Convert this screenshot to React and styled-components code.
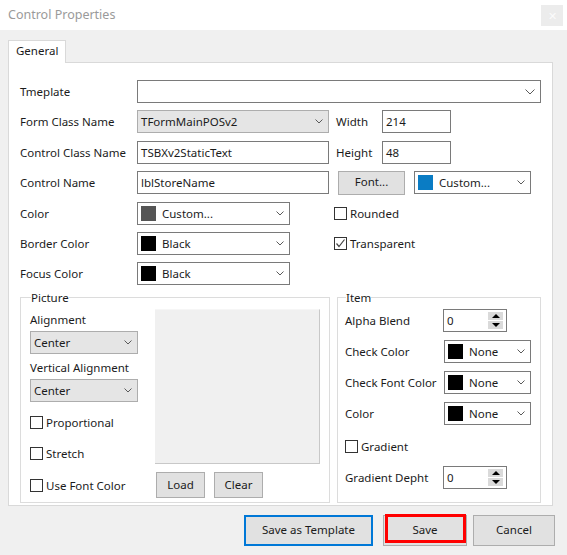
import React from 'react';
import styled, { createGlobalStyle } from 'styled-components';

const GlobalStyle = createGlobalStyle`
  html, body {
    margin: 0;
    padding: 0;
    background: #f0f0f0;
  }
  body {
    font-family: "Noto Sans", "Open Sans", sans-serif;
    font-size: 11.5px;
    color: #1b1b1b;
  }
  * {
    box-sizing: border-box;
  }
`;

const Window = styled.div`
  width: 567px;
  height: 555px;
  display: flex;
  flex-direction: column;
  background: #f0f0f0;
  overflow: hidden;
`;

const TitleBar = styled.div`
  height: 30px;
  flex: none;
  background: #fff;
  display: flex;
  align-items: center;
  justify-content: space-between;
  padding: 0 4px 2px 8px;
`;

const Title = styled.span`
  font-size: 12.5px;
  color: #9a9a9a;
`;

const CloseButton = styled.div`
  width: 22px;
  height: 21px;
  margin-top: 3px;
  background: #ececec;
  color: #fbfbfb;
  font-size: 11px;
  display: flex;
  align-items: center;
  justify-content: center;
`;

const TabStrip = styled.div`
  display: flex;
  padding: 10px 0 0 8px;
`;

const Tab = styled.div`
  width: 58px;
  height: 23px;
  background: #fff;
  border: 1px solid #d9d9d9;
  border-bottom: none;
  margin-bottom: -1px;
  position: relative;
  z-index: 1;
  display: flex;
  align-items: center;
  padding: 0 0 3px 7px;
`;

const TabPage = styled.div`
  margin-left: 8px;
  width: 545px;
  height: 444px;
  background: #fff;
  border: 1px solid #d9d9d9;
  padding: 17px 11px 2px 11px;
  display: flex;
  flex-direction: column;
`;

const FormRows = styled.div`
  display: flex;
  flex-direction: column;
  gap: 7.4px;
`;

const Row = styled.div`
  display: flex;
  align-items: center;
  height: 23px;
`;

const Label = styled.span`
  width: ${(p) => p.$w || 117}px;
  flex: none;
  white-space: nowrap;
`;

const TextInput = styled.div`
  width: ${(p) => (p.$w ? `${p.$w}px` : 'auto')};
  flex: ${(p) => (p.$w ? 'none' : '1')};
  height: 23px;
  border: 1px solid #7a7a7a;
  background: #fff;
  display: flex;
  align-items: center;
  padding-left: 3px;
  margin-right: ${(p) => p.$mr || 0}px;
`;

const ComboBox = styled.div`
  width: ${(p) => (p.$w ? `${p.$w}px` : 'auto')};
  flex: ${(p) => (p.$w ? 'none' : '1')};
  height: 23px;
  border: 1px solid ${(p) => (p.$gray ? '#adadad' : '#7a7a7a')};
  background: ${(p) => (p.$gray ? '#e5e5e5' : '#fff')};
  display: flex;
  align-items: center;
  padding: 0 0 0 3px;
  margin-right: ${(p) => p.$mr || 0}px;
`;

const ComboText = styled.span`
  flex: 1;
  white-space: nowrap;
`;

const Swatch = styled.span`
  width: 15px;
  height: 15px;
  flex: none;
  background: ${(p) => p.$color};
  margin-right: 6px;
`;

const ChevronWrap = styled.span`
  width: ${(p) => p.$pad}px;
  display: flex;
  justify-content: center;
  flex: none;
`;

const Chevron = ({ big }) => (
  <ChevronWrap $pad={big ? 21 : 19}>
    <svg width={big ? 10 : 8} height={big ? 6 : 5} viewBox={big ? '0 0 10 6' : '0 0 8 5'}>
      <polyline
        points={big ? '0.5,0.5 5,5 9.5,0.5' : '0.5,0.5 4,4 7.5,0.5'}
        fill="none"
        stroke="#5a5a5a"
        strokeWidth="1"
      />
    </svg>
  </ChevronWrap>
);

const Combo = ({ w, gray, swatch, children, big, mr }) => (
  <ComboBox $w={w} $gray={gray} $mr={mr}>
    {swatch && <Swatch $color={swatch} />}
    <ComboText>{children}</ComboText>
    <Chevron big={big} />
  </ComboBox>
);

const Button = styled.div`
  width: ${(p) => p.$w}px;
  height: ${(p) => p.$h || 26}px;
  flex: none;
  background: #e1e1e1;
  border: 1px solid ${(p) => (p.$default ? '#0078d7' : '#adadad')};
  box-shadow: ${(p) => (p.$default ? 'inset 0 0 0 1px #0078d7' : 'none')};
  display: flex;
  align-items: center;
  justify-content: center;
  padding-bottom: 2px;
  margin-right: ${(p) => p.$mr || 0}px;
  position: relative;
`;

const Highlight = styled.span`
  position: absolute;
  left: 1px;
  right: 0px;
  top: -2px;
  bottom: 2px;
  border: 3px solid #ff0000;
`;

const CheckRow = styled.label`
  display: flex;
  align-items: center;
  height: 16px;
  margin-top: ${(p) => p.$mt || 0}px;
`;

const Box = styled.span`
  width: 13px;
  height: 13px;
  border: 1px solid #333;
  background: #fff;
  margin-right: 3px;
  display: flex;
  align-items: center;
  justify-content: center;
`;

const CheckBox = ({ checked, children, mt }) => (
  <CheckRow $mt={mt}>
    <Box>
      {checked && (
        <svg width="11" height="11" viewBox="0 0 11 11">
          <polyline points="1.5,5.5 4,8.5 9.5,1.5" fill="none" stroke="#444" strokeWidth="1.2" />
        </svg>
      )}
    </Box>
    {children}
  </CheckRow>
);

const Groups = styled.div`
  flex: 1;
  display: flex;
  gap: 7px;
  margin-top: 5px;
`;

const Group = styled.fieldset`
  margin: 0;
  width: ${(p) => p.$w}px;
  border: 1px solid #dcdcdc;
  padding: 4px 0 0 ${(p) => p.$pl}px;
  min-width: 0;
`;

const Legend = styled.legend`
  padding: 0;
  margin-left: ${(p) => p.$ml}px;
  line-height: 15px;
`;

const PictureLayout = styled.div`
  display: flex;
  gap: 17px;
`;

const PictureLeft = styled.div`
  width: 108px;
  display: flex;
  flex-direction: column;
`;

const SmallLabel = styled.div`
  height: 16px;
  line-height: 16px;
  margin-top: ${(p) => p.$mt || 0}px;
  margin-bottom: 3px;
  white-space: nowrap;
`;

const PictureRight = styled.div`
  display: flex;
  flex-direction: column;
`;

const PictureBox = styled.div`
  width: 165px;
  height: 155px;
  background: #f0f0f0;
  border-right: 1px solid #c8c8c8;
  border-bottom: 1px solid #c8c8c8;
  border-top: 1px solid #f6f6f6;
  margin-bottom: 8px;
`;

const ButtonRow = styled.div`
  display: flex;
  gap: 9px;
  padding-left: 1px;
`;

const ItemRows = styled.div`
  display: flex;
  flex-direction: column;
`;

const ItemRow = styled.div`
  display: flex;
  align-items: center;
  height: 23px;
  margin-top: ${(p) => p.$mt || 0}px;
`;

const SpinBox = styled.div`
  width: 64px;
  height: 23px;
  border: 1px solid #7a7a7a;
  background: #fff;
  display: flex;
  align-items: center;
  padding-left: 3px;
  justify-content: space-between;
`;

const SpinButtons = styled.div`
  display: flex;
  flex-direction: column;
  gap: 1px;
  margin-right: 3px;
`;

const SpinButton = styled.div`
  width: 15px;
  height: 8px;
  background: #dadada;
  display: flex;
  align-items: center;
  justify-content: center;
`;

const Spin = ({ value }) => (
  <SpinBox>
    <span>{value}</span>
    <SpinButtons>
      <SpinButton>
        <svg width="8" height="4" viewBox="0 0 8 4">
          <polygon points="0,4 4,0 8,4" fill="#000" />
        </svg>
      </SpinButton>
      <SpinButton>
        <svg width="8" height="4" viewBox="0 0 8 4">
          <polygon points="0,0 8,0 4,4" fill="#000" />
        </svg>
      </SpinButton>
    </SpinButtons>
  </SpinBox>
);

const Footer = styled.div`
  flex: 1;
  display: flex;
  justify-content: flex-end;
  align-items: flex-start;
  padding: 9px 12px 0 0;
`;

export default function App() {
  return (
    <Window>
      <GlobalStyle />
      <TitleBar>
        <Title>Control Properties</Title>
        <CloseButton>✕</CloseButton>
      </TitleBar>
      <TabStrip>
        <Tab>General</Tab>
      </TabStrip>
      <TabPage>
        <FormRows>
          <Row>
            <Label>Tmeplate</Label>
            <Combo big />
          </Row>
          <Row>
            <Label>Form Class Name</Label>
            <Combo w={192} gray mr={7}>TFormMainPOSv2</Combo>
            <Label $w={46}>Width</Label>
            <TextInput $w={69}>214</TextInput>
          </Row>
          <Row>
            <Label>Control Class Name</Label>
            <TextInput $w={192} $mr={7}>TSBXv2StaticText</TextInput>
            <Label $w={46}>Height</Label>
            <TextInput $w={69}>48</TextInput>
          </Row>
          <Row>
            <Label>Control Name</Label>
            <TextInput $w={192} $mr={9}>lblStoreName</TextInput>
            <Button $w={67} $h={24} $mr={9}>Font...</Button>
            <Combo w={117} swatch="#0a7cc4">Custom...</Combo>
          </Row>
          <Row>
            <Label>Color</Label>
            <Combo w={153} swatch="#555555" mr={44}>Custom...</Combo>
            <CheckBox>Rounded</CheckBox>
          </Row>
          <Row>
            <Label>Border Color</Label>
            <Combo w={153} swatch="#000" mr={44}>Black</Combo>
            <CheckBox checked>Transparent</CheckBox>
          </Row>
          <Row>
            <Label>Focus Color</Label>
            <Combo w={153} swatch="#000">Black</Combo>
          </Row>
        </FormRows>
        <Groups>
          <Group $w={310} $pl={9}>
            <Legend $ml={1}>Picture</Legend>
            <PictureLayout>
              <PictureLeft>
                <SmallLabel $mt={3}>Alignment</SmallLabel>
                <Combo w={108} gray>Center</Combo>
                <SmallLabel $mt={6}>Vertical Alignment</SmallLabel>
                <Combo w={108} gray>Center</Combo>
                <CheckBox mt={12}>Proportional</CheckBox>
                <CheckBox mt={15}>Stretch</CheckBox>
                <CheckBox mt={16}>Use Font Color</CheckBox>
              </PictureLeft>
              <PictureRight>
                <PictureBox />
                <ButtonRow>
                  <Button $w={49}>Load</Button>
                  <Button $w={49}>Clear</Button>
                </ButtonRow>
              </PictureRight>
            </PictureLayout>
          </Group>
          <Group $w={204} $pl={7}>
            <Legend $ml={1}>Item</Legend>
            <ItemRows>
              <ItemRow>
                <Label $w={98}>Alpha Blend</Label>
                <Spin value="0" />
              </ItemRow>
              <ItemRow $mt={8}>
                <Label $w={99}>Check Color</Label>
                <Combo w={87} swatch="#000">None</Combo>
              </ItemRow>
              <ItemRow $mt={8}>
                <Label $w={99}>Check Font Color</Label>
                <Combo w={87} swatch="#000">None</Combo>
              </ItemRow>
              <ItemRow $mt={8}>
                <Label $w={99}>Color</Label>
                <Combo w={87} swatch="#000">None</Combo>
              </ItemRow>
              <CheckBox mt={13}>Gradient</CheckBox>
              <ItemRow $mt={12}>
                <Label $w={98}>Gradient Depht</Label>
                <Spin value="0" />
              </ItemRow>
            </ItemRows>
          </Group>
        </Groups>
      </TabPage>
      <Footer>
        <Button $w={129} $h={31} $default $mr={10}>Save as Template</Button>
        <Button $w={84} $h={31} $mr={6}>
          Save
          <Highlight />
        </Button>
        <Button $w={82} $h={31}>Cancel</Button>
      </Footer>
    </Window>
  );
}
